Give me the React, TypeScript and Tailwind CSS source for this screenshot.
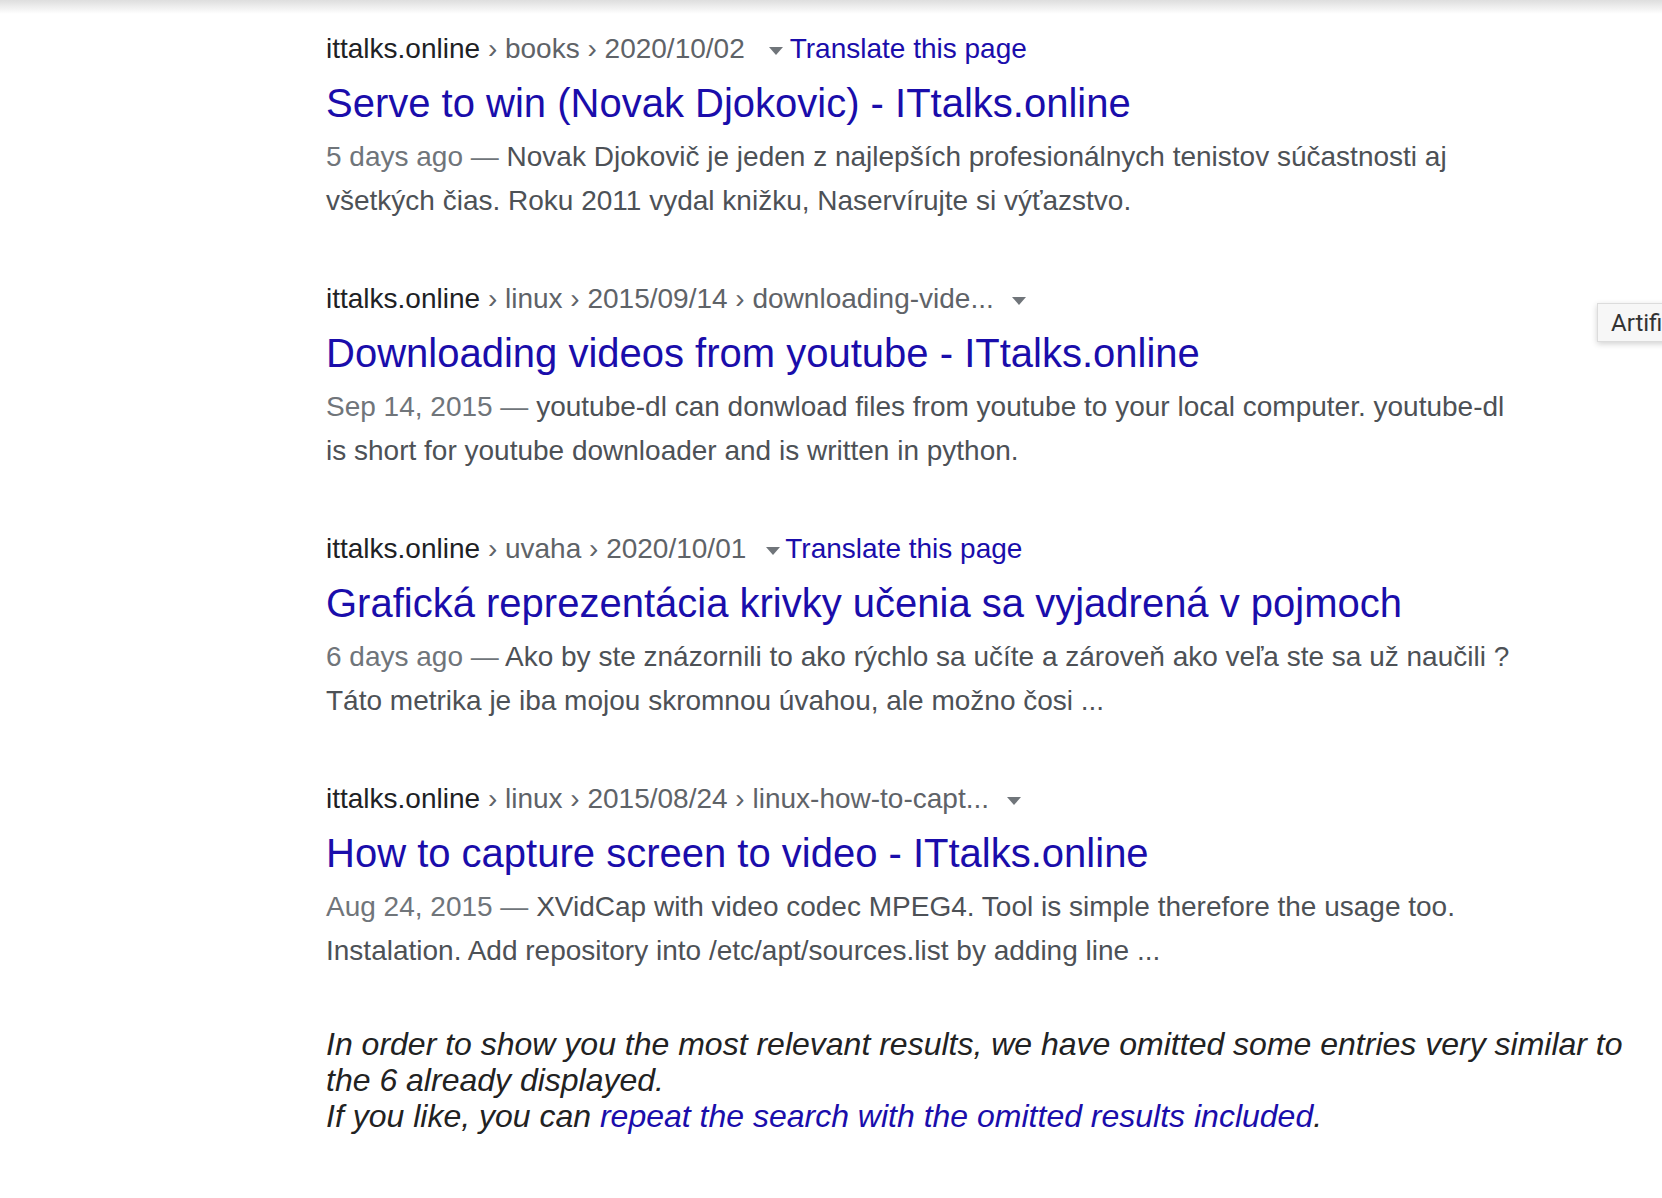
import React from 'react';

type Result = {
  path: string;
  title: string;
  date: string;
  snippet: string;
  translate?: boolean;
  arrowGap: string;
  linkGap?: string;
};

const results: Result[] = [
  {
    path: '› books › 2020/10/02',
    title: 'Serve to win (Novak Djokovic) - ITtalks.online',
    date: '5 days ago',
    snippet:
      'Novak Djokovič je jeden z najlepších profesionálnych tenistov súčastnosti aj všetkých čias. Roku 2011 vydal knižku, Naservírujte si výťazstvo.',
    translate: true,
    arrowGap: 'ml-[24px]',
    linkGap: 'ml-[7px]',
  },
  {
    path: '› linux › 2015/09/14 › downloading-vide...',
    title: 'Downloading videos from youtube - ITtalks.online',
    date: 'Sep 14, 2015',
    snippet:
      'youtube-dl can donwload files from youtube to your local computer. youtube-dl is short for youtube downloader and is written in python.',
    arrowGap: 'ml-[18px]',
  },
  {
    path: '› uvaha › 2020/10/01',
    title: 'Grafická reprezentácia krivky učenia sa vyjadrená v pojmoch',
    date: '6 days ago',
    snippet:
      'Ako by ste znázornili to ako rýchlo sa učíte a zároveň ako veľa ste sa už naučili ? Táto metrika je iba mojou skromnou úvahou, ale možno čosi ...',
    translate: true,
    arrowGap: 'ml-[20px]',
    linkGap: 'ml-[5px]',
  },
  {
    path: '› linux › 2015/08/24 › linux-how-to-capt...',
    title: 'How to capture screen to video - ITtalks.online',
    date: 'Aug 24, 2015',
    snippet:
      'XVidCap with video codec MPEG4. Tool is simple therefore the usage too. Instalation. Add repository into /etc/apt/sources.list by adding line ...',
    arrowGap: 'ml-[18px]',
  },
];

const Arrow = ({ className }: { className: string }) => (
  <span
    className={`${className} inline-block w-0 h-0 translate-y-[2px] border-l-[7.5px] border-r-[7.5px] border-t-[8px] border-l-transparent border-r-transparent border-t-[#70757a]`}
  />
);

const App = () => {
  return (
    <div
      className="relative w-full h-[1198px] bg-white overflow-hidden"
      style={{ fontFamily: '"Liberation Sans", Arial, sans-serif' }}
    >
      {/* header shadow */}
      <div className="h-[14px] bg-gradient-to-b from-[#dedede] to-white" />

      <div className="pl-[326px] pt-[17px]">
        <div className="flex flex-col gap-[58px] w-[1200px]">
          {results.map((r, i) => (
            <div key={i}>
              <div className="flex items-center h-[36px] text-[28px] leading-[36px] whitespace-nowrap">
                <span className="text-[#202124]">ittalks.online</span>
                <span className="text-[#5f6368]">&nbsp;{r.path}</span>
                <Arrow className={r.arrowGap} />
                {r.translate && (
                  <a href="#" className={`${r.linkGap} text-[#1a0dab]`}>
                    Translate this page
                  </a>
                )}
              </div>
              <h3 className="pt-[10px] mb-[6px] text-[40px] leading-[52px] text-[#1a0dab] whitespace-nowrap">
                <a href="#">{r.title}</a>
              </h3>
              <div className="text-[28px] leading-[44px] text-[#4d5156]">
                <span className="text-[#70757a]">{r.date} — </span>
                {r.snippet}
              </div>
            </div>
          ))}
        </div>

        <p className="mt-[53px] w-[1304px] text-[32px] leading-[36px] italic text-[#222]">
          In order to show you the most relevant results, we have omitted some entries very similar to the 6
          already displayed.
          <br />
          If you like, you can{' '}
          <a href="#" className="text-[#1a0dab]">
            repeat the search with the omitted results included
          </a>
          .
        </p>
      </div>

      {/* tooltip clipped at the right edge */}
      <div
        className="absolute left-[1597px] top-[303px] h-[39px] pl-[13px] pr-[10px] flex items-center bg-[#f7f7f7] border border-[#dcdcdc] shadow-[0_2px_6px_rgba(0,0,0,0.18)] text-[24px] text-[#333] whitespace-nowrap"
        style={{ fontFamily: 'Roboto, "Noto Sans", sans-serif' }}
      >
        Artificial intelligence
      </div>
    </div>
  );
};

export default App;
